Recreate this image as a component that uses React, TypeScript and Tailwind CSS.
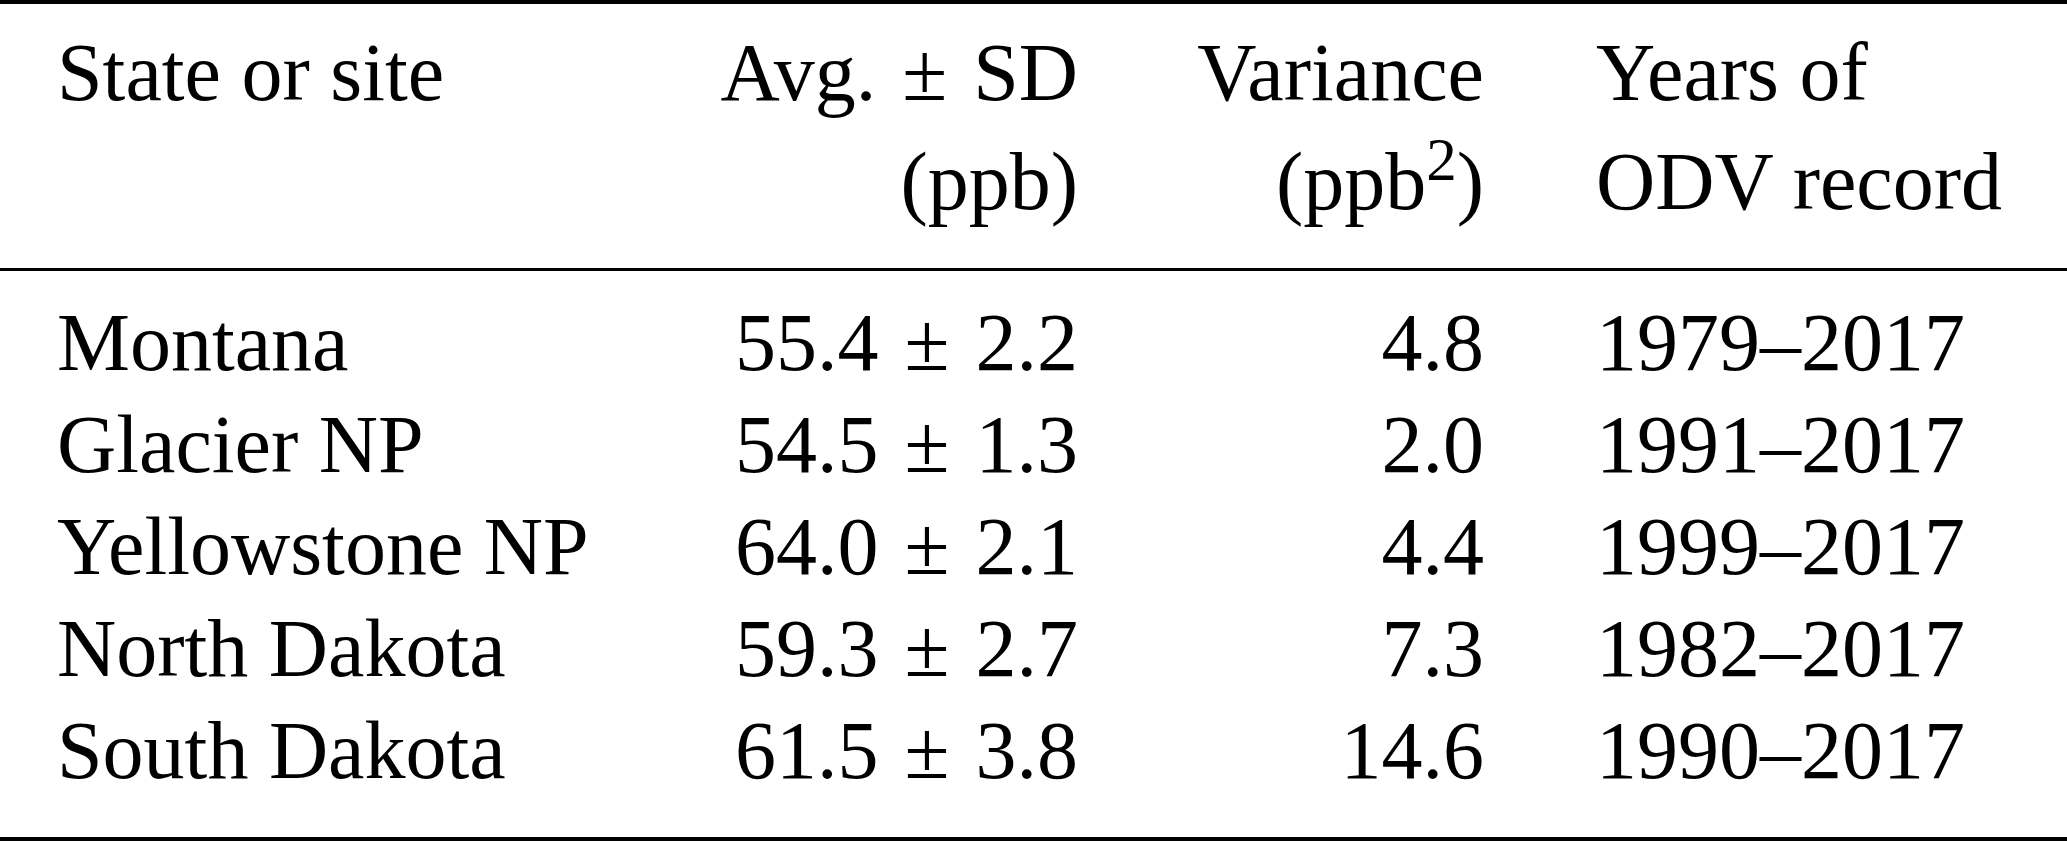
const DASH = "\u2013";
const PM = "\u00b1";

const rows = [
  { site: "Montana", avg: "55.4", sd: "2.2", variance: "4.8", from: "1979" },
  { site: "Glacier NP", avg: "54.5", sd: "1.3", variance: "2.0", from: "1991" },
  { site: "Yellowstone NP", avg: "64.0", sd: "2.1", variance: "4.4", from: "1999" },
  { site: "North Dakota", avg: "59.3", sd: "2.7", variance: "7.3", from: "1982" },
  { site: "South Dakota", avg: "61.5", sd: "3.8", variance: "14.6", from: "1990" },
];

const PlusMinus = () => <span className="mx-[26px]">{PM}</span>;

const App = () => {
  return (
    <div className="w-[2067px] h-[841px] bg-white text-black font-['Liberation_Serif'] text-[82px]">
      <div className="h-[4px] bg-black" />

      {/* header */}
      <div className="pt-[14px] pb-[32px] pl-[57px] grid grid-cols-[643px_378px_406px_1fr] leading-[109px]">
        <div>State or site</div>
        <div className="text-right">
          <div>
            Avg.
            <PlusMinus />
            SD
          </div>
          <div>(ppb)</div>
        </div>
        <div className="text-right">
          <div>Variance</div>
          <div>
            (ppb<sup className="text-[61px] top-[-29px]">2</sup>)
          </div>
        </div>
        <div className="pl-[112px]">
          <div>Years of</div>
          <div>ODV record</div>
        </div>
      </div>

      <div className="h-[3px] bg-black" />

      {/* body */}
      <div className="pt-[21px] pb-[35px] pl-[57px] leading-[102px]">
        {rows.map((r) => (
          <div key={r.site} className="grid grid-cols-[643px_378px_406px_1fr]">
            <div>{r.site}</div>
            <div className="text-right">
              {r.avg}
              <PlusMinus />
              {r.sd}
            </div>
            <div className="text-right">{r.variance}</div>
            <div className="pl-[112px]">
              {r.from}
              {DASH}2017
            </div>
          </div>
        ))}
      </div>

      <div className="h-[4px] bg-black" />
    </div>
  );
};

export default App;
